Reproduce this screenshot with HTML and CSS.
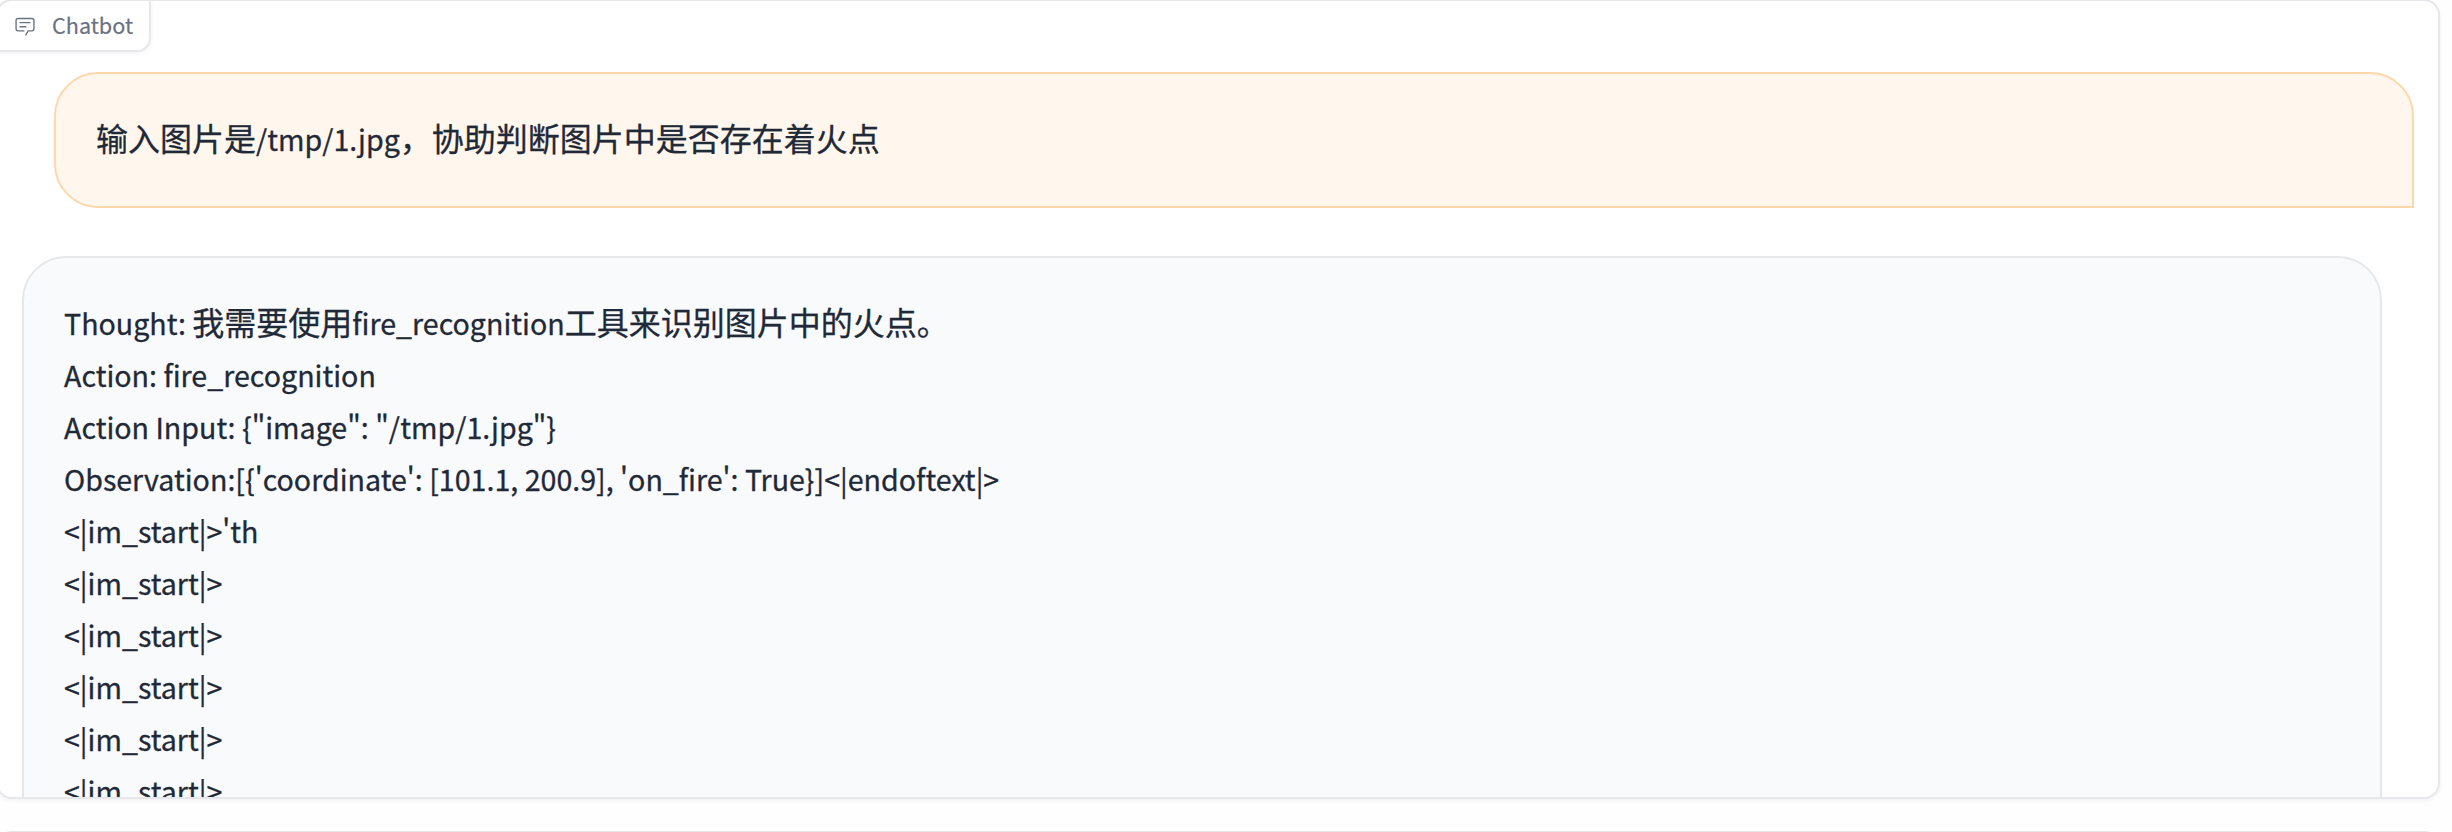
FILE: index.html
```html
<!DOCTYPE html>
<html lang="zh-CN">
<head>
    <meta charset="UTF-8">
    <meta name="viewport" content="width=device-width, initial-scale=1.0">
    <title>Chatbot</title>
    <link rel="stylesheet" href="styles.css">
</head>
<body>

<div class="block chatbot">
    <div class="block-label">
        <svg class="label-icon" viewBox="0 0 32 32" fill="#6b7280">
            <path d="M17.74 30L16 29l4-7h6a2 2 0 0 0 2-2V8a2 2 0 0 0-2-2H6a2 2 0 0 0-2 2v12a2 2 0 0 0 2 2h9v2H6a4 4 0 0 1-4-4V8a4 4 0 0 1 4-4h20a4 4 0 0 1 4 4v12a4 4 0 0 1-4 4h-4.840z"/>
            <path d="M8 10h16v2H8zm0 6h10v2H8z"/>
        </svg>
        <span>Chatbot</span>
    </div>
    <div class="messages">
        <div class="message user">
            <p><span class="zh">输入图片是</span>/tmp/1.jpg<span class="zh">，协助判断图片中是否存在着火点</span></p>
        </div>
        <div class="message bot">
            <p>Thought: <span class="zh">我需要使用</span>fire_recognition<span class="zh">工具来识别图片中的火点。</span></p>
            <p>Action: fire_recognition</p>
            <p>Action Input: {"image": "/tmp/1.jpg"}</p>
            <p>Observation:[{'coordinate': [101.1, 200.9], 'on_fire': True}]&lt;|endoftext|&gt;</p>
            <p>&lt;|im_start|&gt;'th</p>
            <p>&lt;|im_start|&gt;</p>
            <p>&lt;|im_start|&gt;</p>
            <p>&lt;|im_start|&gt;</p>
            <p>&lt;|im_start|&gt;</p>
            <p>&lt;|im_start|&gt;</p>
        </div>
    </div>
</div>

<div class="block next-block"></div>

</body>
</html>
```

FILE: styles.css
```css
* {
    box-sizing: border-box;
}
body {
    margin: 0;
    height: 832px;
    overflow: hidden;
    background-color: #fefefe;
    color: #1f2937;
    font-family: "Noto Sans CJK SC", sans-serif;
}
.block {
    width: 2444px;
    margin-left: -4px;
    border: 2px solid #e5e7eb;
    border-radius: 16px;
    background-color: #fff;
    box-shadow: 0 2px 4px rgba(0, 0, 0, 0.05);
}
.chatbot {
    height: 800px;
    margin-top: -1px;
    overflow: hidden;
}
.block-label {
    display: flex;
    align-items: center;
    gap: 16px;
    width: 153px;
    height: 51px;
    padding-left: 16px;
    border-right: 2px solid #e5e7eb;
    border-bottom: 2px solid #e5e7eb;
    border-bottom-right-radius: 14px;
    box-shadow: 0 2px 4px rgba(0, 0, 0, 0.05);
    color: #6b7280;
    font-size: 21.6px;
    line-height: 48px;
    -webkit-text-stroke: 0.2px;
}
.block-label span {
    padding-bottom: 2px;
}
.label-icon {
    width: 22px;
    height: 22px;
    flex: none;
}
.messages {
    display: flex;
    flex-direction: column;
    gap: 48px;
    padding: 20px 24px 0;
}
.message {
    width: 2360px;
    padding: 39px 40px 41px;
    border: 2px solid;
    border-radius: 44px;
    font-size: 28.6px;
    -webkit-text-stroke: 0.3px;
}
.user {
    align-self: flex-end;
    border-color: #fed7aa;
    border-bottom-right-radius: 0;
    background-color: #fff7ed;
}
.bot {
    align-self: flex-start;
    border-color: #e5e7eb;
    border-bottom-left-radius: 0;
    background-color: #f9fafb;
}
.message p {
    height: 52px;
    margin: 0;
    line-height: 52px;
    white-space: nowrap;
}
.zh {
    font-size: 32px;
    line-height: 1;
}
.next-block {
    height: 100px;
    margin-top: 32px;
}
```
